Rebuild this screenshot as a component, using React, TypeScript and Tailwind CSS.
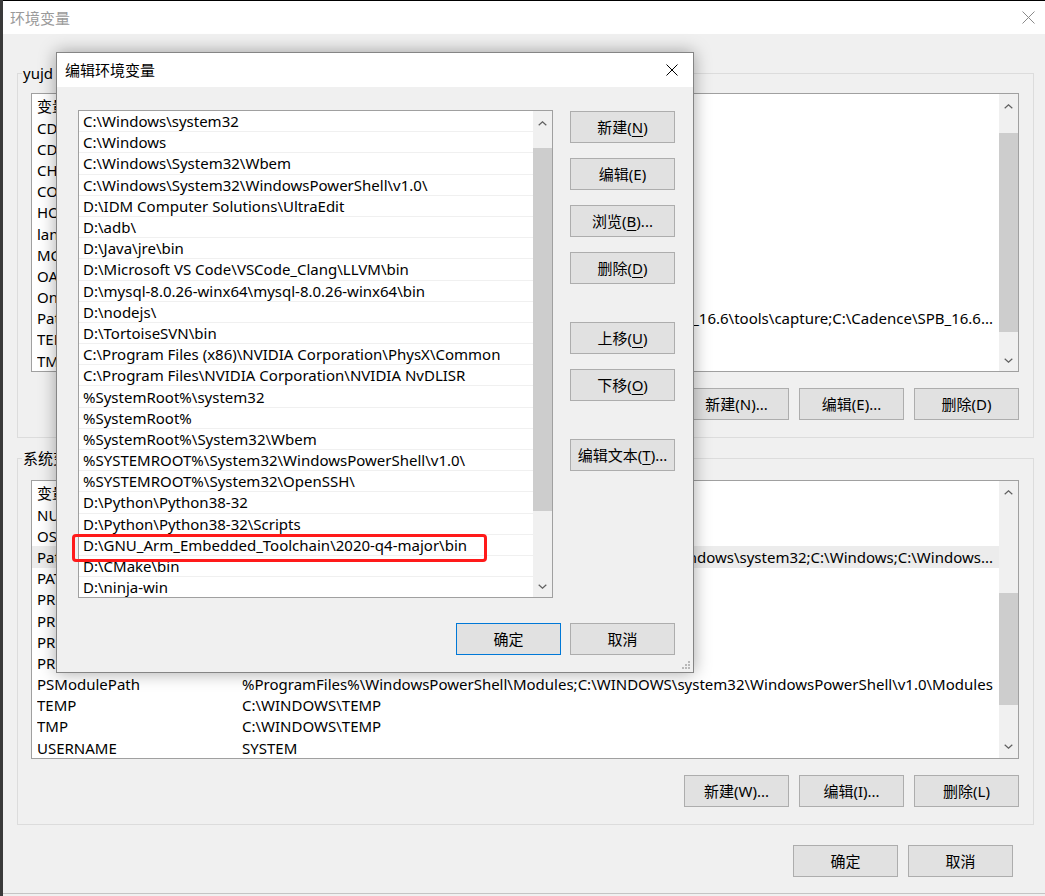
import React from "react";

const FONT = "font-['Noto_Sans','Noto_Sans_CJK_SC',sans-serif]";

function Chevron({ up }: { up?: boolean }) {
  return (
    <svg width="9" height="5" viewBox="0 0 9 5">
      <polyline
        points={up ? "0.7,4.3 4.5,0.8 8.3,4.3" : "0.7,0.7 4.5,4.2 8.3,0.7"}
        fill="none"
        stroke="#606060"
        strokeWidth="1.2"
      />
    </svg>
  );
}

function VScroll({ top, gap, thumb, bottom }: { top: string; gap: string; thumb: string; bottom: string }) {
  return (
    <div className="w-[19px] shrink-0 bg-[#f0f0f0] flex flex-col">
      <div className={`${top} w-full flex items-center justify-center shrink-0`}>
        <Chevron up />
      </div>
      <div className={`${gap} shrink-0`} />
      <div className={`${thumb} w-full bg-[#cdcdcd] shrink-0`} />
      <div className="flex-1" />
      <div className={`${bottom} w-full flex items-center justify-center shrink-0`}>
        <Chevron />
      </div>
    </div>
  );
}

function Btn({ children, focus }: { children: React.ReactNode; focus?: boolean }) {
  return (
    <div
      className={`h-[32px] w-[105px] shrink-0 flex items-center justify-center bg-[#e1e1e1] border ${
        focus ? "border-[#0078d7]" : "border-[#adadad]"
      } text-[15px] leading-[20px] text-black whitespace-nowrap`}
    >
      {children}
    </div>
  );
}

function U({ children }: { children: React.ReactNode }) {
  return <span className="underline underline-offset-[3px] decoration-1">{children}</span>;
}

function CloseX({ color, size }: { color: string; size: number }) {
  return (
    <svg width={size} height={size} viewBox={`0 0 ${size} ${size}`}>
      <line x1="0.5" y1="0.5" x2={size - 0.5} y2={size - 0.5} stroke={color} strokeWidth="1" />
      <line x1={size - 0.5} y1="0.5" x2="0.5" y2={size - 0.5} stroke={color} strokeWidth="1" />
    </svg>
  );
}

type Row = { name: string; value: string; right?: boolean; hover?: boolean };

function VarList({ rows, scroll }: { rows: Row[]; scroll: React.ReactNode }) {
  return (
    <div className="h-[279px] w-full min-w-0 border border-[#a0a0a0] bg-white flex overflow-hidden">
      <div className="flex-1 min-w-0 flex flex-col overflow-hidden">
        <div className="h-[23px] shrink-0 flex items-center pl-[5px] text-[15px] leading-[20px]">
          <div className="w-[205px] shrink-0">变量</div>
          <div className="flex-1">值</div>
        </div>
        {rows.map((r, i) => (
          <div
            key={i}
            className={`h-[21.2px] shrink-0 min-w-0 flex items-center pl-[5px] text-[15px] leading-[20px] whitespace-nowrap ${
              r.hover ? "bg-[#ececec]" : ""
            }`}
          >
            <div className="w-[205px] shrink-0 overflow-hidden">{r.name}</div>
            {r.right ? (
              <div className="flex-1 min-w-0 overflow-hidden flex justify-end pr-[6px]">
                <span className="shrink-0">{r.value}</span>
              </div>
            ) : (
              <div className="flex-1 min-w-0 overflow-hidden">{r.value}</div>
            )}
          </div>
        ))}
      </div>
      {scroll}
    </div>
  );
}

const userRows: Row[] = [
  { name: "CDS_LIC_FILE", value: "5280@localhost" },
  { name: "CDSROOT", value: "C:\\Cadence\\SPB_16.6" },
  { name: "CHROME_PATH", value: "C:\\Chrome" },
  { name: "COMPUTERNAME", value: "YUJD" },
  { name: "HOME", value: "C:\\Cadence\\SPB_Data" },
  { name: "lang", value: "en" },
  { name: "MGLS_LICENSE_FILE", value: "1717@localhost" },
  { name: "OANDA", value: "D:\\OANDA" },
  { name: "OneDrive", value: "C:\\Users\\yujd\\OneDrive" },
  {
    name: "Path",
    value:
      "C:\\Cadence\\SPB_16.6\\tools\\bin;C:\\Cadence\\SPB_16.6\\tools\\pcb\\bin;C:\\Cadence\\SPB_16.6\\tools\\capture;C:\\Cadence\\SPB_16.6...",
    right: true,
  },
  { name: "TEMP", value: "%USERPROFILE%\\AppData\\Local\\Temp" },
  { name: "TMP", value: "%USERPROFILE%\\AppData\\Local\\Temp" },
];

const sysRows: Row[] = [
  { name: "NUMBER_OF_PROCESSORS", value: "8" },
  { name: "OS", value: "Windows_NT" },
  {
    name: "Path",
    value: "C:\\Program Files\\Common Files;C:\\Windows\\system32;C:\\Windows;C:\\Windows...",
    right: true,
    hover: true,
  },
  { name: "PATHEXT", value: ".COM;.EXE;.BAT;.CMD;.VBS;.VBE;.JS" },
  { name: "PROCESSOR_ARCHITECTURE", value: "AMD64" },
  { name: "PROCESSOR_IDENTIFIER", value: "Intel64 Family 6" },
  { name: "PROCESSOR_LEVEL", value: "6" },
  { name: "PROCESSOR_REVISION", value: "9e0a" },
  {
    name: "PSModulePath",
    value: "%ProgramFiles%\\WindowsPowerShell\\Modules;C:\\WINDOWS\\system32\\WindowsPowerShell\\v1.0\\Modules",
  },
  { name: "TEMP", value: "C:\\WINDOWS\\TEMP" },
  { name: "TMP", value: "C:\\WINDOWS\\TEMP" },
  { name: "USERNAME", value: "SYSTEM" },
];

const pathRows = [
  "C:\\Windows\\system32",
  "C:\\Windows",
  "C:\\Windows\\System32\\Wbem",
  "C:\\Windows\\System32\\WindowsPowerShell\\v1.0\\",
  "D:\\IDM Computer Solutions\\UltraEdit",
  "D:\\adb\\",
  "D:\\Java\\jre\\bin",
  "D:\\Microsoft VS Code\\VSCode_Clang\\LLVM\\bin",
  "D:\\mysql-8.0.26-winx64\\mysql-8.0.26-winx64\\bin",
  "D:\\nodejs\\",
  "D:\\TortoiseSVN\\bin",
  "C:\\Program Files (x86)\\NVIDIA Corporation\\PhysX\\Common",
  "C:\\Program Files\\NVIDIA Corporation\\NVIDIA NvDLISR",
  "%SystemRoot%\\system32",
  "%SystemRoot%",
  "%SystemRoot%\\System32\\Wbem",
  "%SYSTEMROOT%\\System32\\WindowsPowerShell\\v1.0\\",
  "%SYSTEMROOT%\\System32\\OpenSSH\\",
  "D:\\Python\\Python38-32",
  "D:\\Python\\Python38-32\\Scripts",
  "D:\\GNU_Arm_Embedded_Toolchain\\2020-q4-major\\bin",
  "D:\\CMake\\bin",
  "D:\\ninja-win",
];

export default function App() {
  return (
    <div className={`relative w-[1045px] h-[896px] overflow-hidden flex bg-[#f0f0f0] text-black ${FONT}`}>
      <div className="w-[3px] shrink-0 bg-[#3a3a3a]" />
      <div className="flex-1 min-w-0 h-[894px] flex flex-col border-t border-black border-b border-b-[#c4c4c4]">
        <div className="h-[33px] shrink-0 bg-white flex items-center justify-between pl-[7px] pr-[10px]">
          <span className="text-[15px] leading-[20px] text-[#9a9a9a]">环境变量</span>
          <CloseX color="#8a8a8a" size={13} />
        </div>
        <div className="flex-1 min-w-0 bg-[#f0f0f0] pl-[14px] pr-[11px] pt-[29px]">
          <fieldset className="m-0 min-w-0 border border-[#dcdcdc] pl-[13px] pr-[14px] pt-[10px] pb-[17px]">
            <legend className="-ml-[9px] px-[1px] text-[15px] leading-[20px]">yujd 的用户变量(U)</legend>
            <VarList
              rows={userRows}
              scroll={<VScroll top="h-[24px]" gap="h-[15px]" thumb="h-[199px]" bottom="h-[22px]" />}
            />
            <div className="mt-[16px] flex justify-end gap-[10px]">
              <Btn>新建(N)...</Btn>
              <Btn>编辑(E)...</Btn>
              <Btn>删除(D)</Btn>
            </div>
          </fieldset>
          <fieldset className="mx-0 mb-0 mt-[10px] min-w-0 border border-[#dcdcdc] pl-[13px] pr-[14px] pt-[12px] pb-[17px]">
            <legend className="-ml-[9px] px-[1px] text-[15px] leading-[20px]">系统变量(S)</legend>
            <VarList
              rows={sysRows}
              scroll={<VScroll top="h-[23px]" gap="h-[89px]" thumb="h-[112px]" bottom="h-[24px]" />}
            />
            <div className="mt-[16px] flex justify-end gap-[10px]">
              <Btn>新建(W)...</Btn>
              <Btn>编辑(I)...</Btn>
              <Btn>删除(L)</Btn>
            </div>
          </fieldset>
          <div className="mt-[20px] flex justify-end gap-[10px] pr-[21px]">
            <Btn>确定</Btn>
            <Btn>取消</Btn>
          </div>
        </div>
      </div>

      {/* Edit dialog */}
      <div className="absolute left-[56px] top-[52px] w-[638px] h-[621px] border border-[#858585] bg-[#f0f0f0] shadow-[0_0_16px_rgba(0,0,0,0.35)] flex flex-col">
        <div className="h-[34px] shrink-0 bg-white flex items-center justify-between pl-[8px] pr-[15px]">
          <span className="text-[15px] leading-[20px]">编辑环境变量</span>
          <CloseX color="#000000" size={12} />
        </div>
        <div className="flex-1 pl-[21px] pt-[23px]">
          <div className="flex">
            <div className="w-[475px] h-[488px] shrink-0 border border-[#a0a0a0] bg-white flex overflow-hidden">
              <div className="flex-1 min-w-0 flex flex-col">
                {pathRows.map((p, i) => (
                  <div
                    key={i}
                    className="h-[21.2px] shrink-0 box-border border-b border-[#f0f0f0] flex items-center pl-[4px] text-[15px] leading-[20px] whitespace-nowrap"
                  >
                    {p}
                  </div>
                ))}
              </div>
              <VScroll top="h-[24px]" gap="h-[13px]" thumb="h-[363px]" bottom="h-[22px]" />
            </div>
            <div className="ml-[17px] pt-[1px] flex flex-col">
              <Btn>
                新建(<U>N</U>)
              </Btn>
              <div className="h-[15px]" />
              <Btn>编辑(E)</Btn>
              <div className="h-[15px]" />
              <Btn>
                浏览(<U>B</U>)...
              </Btn>
              <div className="h-[15px]" />
              <Btn>
                删除(<U>D</U>)
              </Btn>
              <div className="h-[38px]" />
              <Btn>
                上移(<U>U</U>)
              </Btn>
              <div className="h-[15px]" />
              <Btn>
                下移(<U>O</U>)
              </Btn>
              <div className="h-[38px]" />
              <Btn>
                编辑文本(<U>T</U>)...
              </Btn>
            </div>
          </div>
          <div className="mt-[25px] w-[597px] flex justify-end gap-[9px]">
            <Btn focus>确定</Btn>
            <Btn>取消</Btn>
          </div>
        </div>
        <svg className="absolute right-[3px] bottom-[3px]" width="10" height="10" viewBox="0 0 10 10">
          <rect x="8" y="2" width="2" height="2" fill="#b8b8b8" />
          <rect x="5" y="5" width="2" height="2" fill="#b8b8b8" />
          <rect x="8" y="5" width="2" height="2" fill="#b8b8b8" />
          <rect x="2" y="8" width="2" height="2" fill="#b8b8b8" />
          <rect x="5" y="8" width="2" height="2" fill="#b8b8b8" />
          <rect x="8" y="8" width="2" height="2" fill="#b8b8b8" />
        </svg>
      </div>

      {/* Red annotation box */}
      <div className="absolute left-[72px] top-[534px] w-[415px] h-[28px] border-[3px] border-[#ff1a1a] rounded-[4px]" />
    </div>
  );
}
